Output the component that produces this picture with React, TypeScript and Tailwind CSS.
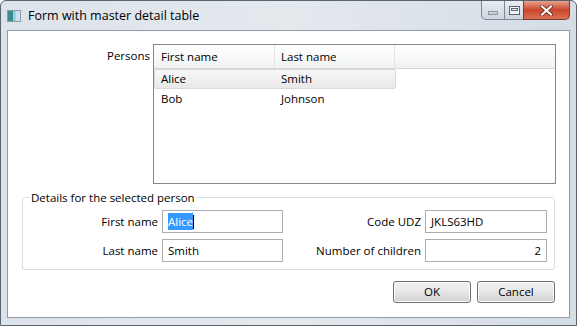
import React from "react";

const font = { fontFamily: '"Segoe UI", "Open Sans", "Noto Sans", sans-serif' };

function TitleIcon() {
  return (
    <svg width="14" height="12" viewBox="0 0 14 12" className="shrink-0">
      <rect x="0.5" y="0.5" width="13" height="11" fill="#e8eef4" stroke="#8a9aa8" />
      <rect x="1" y="1" width="5" height="10" fill="#3b8a8c" />
      <rect x="6" y="1" width="3" height="10" fill="#9bd0e6" />
      <rect x="9" y="1" width="4" height="10" fill="#cfe3ee" />
    </svg>
  );
}

function CaptionButtons() {
  return (
    <div className="flex self-start">
      {/* minimize */}
      <div className="flex h-[19px] w-[24px] items-center justify-center rounded-bl-[5px] border border-t-0 border-[#7d8896] bg-gradient-to-b from-[#e9edf1] to-[#cdd5de]">
        <div className="mt-[5px] h-[4px] w-[10px] border border-[#8e98a4] bg-[#c8d0d8]" />
      </div>
      {/* maximize */}
      <div className="flex h-[19px] w-[18px] items-center justify-center border-b border-[#7d8896] bg-gradient-to-b from-[#e9edf1] to-[#cdd5de]">
        <div className="h-[9px] w-[11px] border border-[#5b6470] bg-[#f3f5f7] p-[1px]">
          <div className="h-[3px] w-full border border-[#5b6470]" />
        </div>
      </div>
      {/* close */}
      <div className="flex h-[19px] w-[47px] items-center justify-center rounded-br-[5px] border border-t-0 border-[#7a3b30] bg-gradient-to-b from-[#e8a08f] via-[#c9452c] to-[#d8704f]">
        <svg width="13" height="11" viewBox="0 0 13 11">
          <path d="M2 1.5 L11 9.5 M11 1.5 L2 9.5" stroke="#6a2a20" strokeWidth="3.6" strokeLinecap="square" />
          <path d="M2 1.5 L11 9.5 M11 1.5 L2 9.5" stroke="#ffffff" strokeWidth="2" strokeLinecap="square" />
        </svg>
      </div>
    </div>
  );
}

function TextBox({ children, right }: { children: React.ReactNode; right?: boolean }) {
  return (
    <div
      className={
        "flex h-[23px] items-center border border-[#abadb3] bg-white px-[5px] text-black " +
        (right ? "justify-end" : "")
      }
    >
      {children}
    </div>
  );
}

function Button({ label }: { label: string }) {
  return (
    <div className="flex h-[22px] w-[78px] items-center justify-center rounded-[3px] border border-[#707070] bg-gradient-to-b from-[#f2f2f2] via-[#e6e6e6] to-[#d0d0d0] text-black shadow-[inset_0_0_0_1px_#fcfcfc]">
      {label}
    </div>
  );
}

export default function App() {
  return (
    <div
      style={font}
      className="flex h-[326px] w-[577px] flex-col overflow-hidden rounded-t-[6px] border border-[#596470] bg-gradient-to-r from-[#dde3ea] via-[#e4e9ee] to-[#d4dce4] text-[11.5px]"
    >
      {/* =========================================================
          TITLE BAR
      ========================================================== */}
      <div className="flex h-[29px] shrink-0">
        <div className="flex flex-1 items-center gap-[7px] pl-[6px] pt-[1px]">
          <TitleIcon />
          <span className="text-[12.5px] text-black">Form with master detail table</span>
        </div>
        <div className="pr-[6px]">
          <CaptionButtons />
        </div>
      </div>

      {/* =========================================================
          CLIENT AREA
      ========================================================== */}
      <div className="mx-[6px] flex h-[288px] flex-col border border-[#8e9aa6] bg-white text-black">

        {/* Persons */}
        <div className="mt-[13px] flex">
          <div className="w-[145px] pr-[3px] pt-[3px] text-right">Persons</div>
          <div className="flex h-[140px] w-[403px] flex-col border border-[#828790]">
            <div className="flex h-[24px] border-b border-[#d5d5d5] bg-gradient-to-b from-[#ffffff] to-[#f1f2f4]">
              <div className="flex w-[121px] items-center border-r border-[#e3e4e6] pl-[7px]">First name</div>
              <div className="flex w-[120px] items-center border-r border-[#e3e4e6] pl-[6px]">Last name</div>
              <div className="flex-1" />
            </div>
            <div className="flex h-[20px] w-[242px] items-center rounded-[2px] border border-[#d9d9d9] bg-gradient-to-b from-[#f8f8f8] to-[#e8e8e8]">
              <div className="w-[121px] pl-[6px]">Alice</div>
              <div className="pl-[5px]">Smith</div>
            </div>
            <div className="flex h-[20px] items-center">
              <div className="w-[122px] pl-[7px]">Bob</div>
              <div className="pl-[5px]">Johnson</div>
            </div>
          </div>
        </div>

        {/* Details group */}
        <fieldset className="ml-[14px] mt-[5px] h-[81px] w-[533px] rounded-[3px] border border-[#d5dfe5] px-0 pb-[7px] pt-[4px]">
          <legend className="ml-[7px] px-[1px]">Details for the selected person</legend>
          <div className="grid grid-cols-[139px_121px_142px_122px] gap-y-[6px]">
            <div className="flex items-center justify-end pr-[4px]">First name</div>
            <TextBox>
              <span className="bg-[#3399ff] text-white">Alice</span>
              <span className="h-[14px] w-[1px] bg-black" />
            </TextBox>
            <div className="flex items-center justify-end pr-[4px]">Code UDZ</div>
            <TextBox>JKLS63HD</TextBox>

            <div className="flex items-center justify-end pr-[4px]">Last name</div>
            <TextBox>Smith</TextBox>
            <div className="flex items-center justify-end pr-[4px]">Number of children</div>
            <TextBox right>2</TextBox>
          </div>
        </fieldset>

        {/* Buttons */}
        <div className="mt-[11px] flex justify-end gap-[6px] pr-[14px]">
          <Button label="OK" />
          <Button label="Cancel" />
        </div>
      </div>
    </div>
  );
}
